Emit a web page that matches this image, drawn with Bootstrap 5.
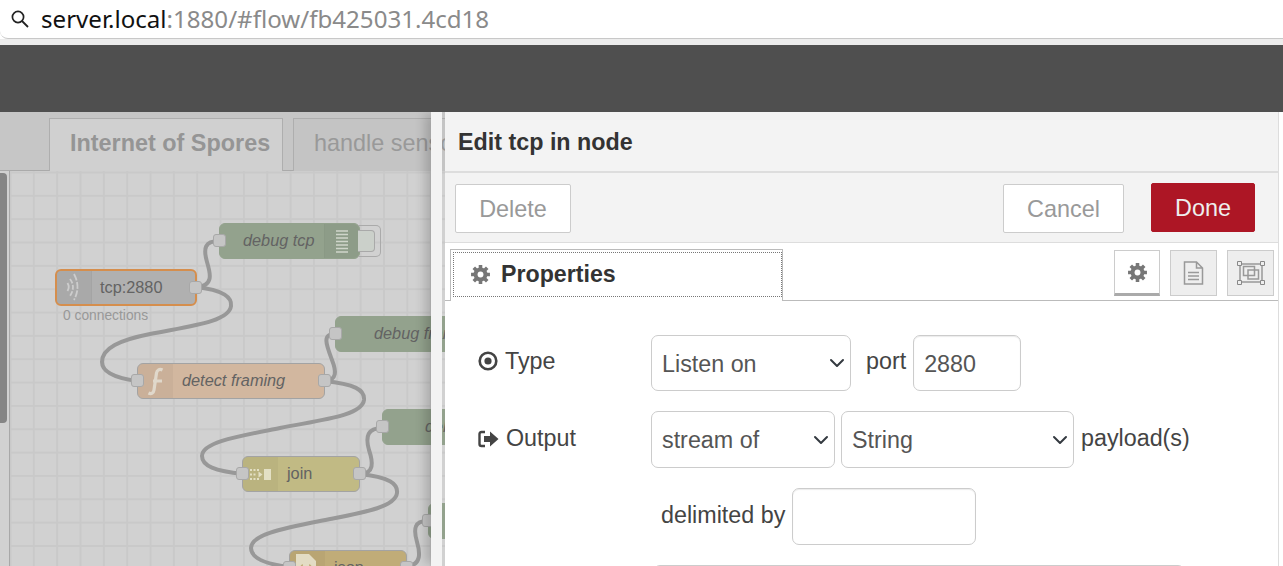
<!DOCTYPE html>
<html lang="en">
<head>
    <meta charset="UTF-8">
    <meta name="viewport" content="width=device-width, initial-scale=1.0">
    <title>Node-RED</title>
    <link rel="stylesheet" href="https://cdn.jsdelivr.net/npm/bootstrap@5.3.0/dist/css/bootstrap.min.css">
    <style>
        html, body { height: 566px; overflow: hidden; background: #fff; }
        body { font-family: "Liberation Sans", Arial, sans-serif; color: #444; }

        /* browser address bar */
        .addr-bar { height: 39px; border-bottom: 1px solid #c8c8c8; border-bottom-left-radius: 8px; padding-left: 10px; font-family: "Noto Sans", sans-serif; font-size: 24.1px; color: #8a8a8a; white-space: nowrap; }
        .addr-bar b { font-weight: 400; color: #111; }
        .addr-bar svg { margin-right: 11px; }
        .addr-gap { height: 6px; background: #ececec; }
        .top-header { height: 67px; background: #4f4f4f; }

        /* workspace */
        .workspace { height: 454px; background: #c6c6c6; overflow: hidden; }
        .flow-tabs { height: 59px; padding: 6px 0 0 49px; border-bottom: 1px solid #aaa; flex-wrap: nowrap; gap: 10px; }
        .flow-tabs .nav-link { height: 53px; border: 1px solid #aeaeae; border-bottom: 0; border-radius: 0; background: #c4c4c4; color: #999; font-size: 23.4px; padding: 7px 20px; white-space: nowrap; }
        .flow-tabs .nav-link.active { background: #d0d0d0; color: #959595; font-weight: 700; width: 234px; margin-bottom: 0; }
        .flow-grid { position: absolute; left: 0; right: 0; top: 59px; bottom: 0; background-color: #d1d1d1; background-image: linear-gradient(#c9c9c9 2px, transparent 2px), linear-gradient(90deg, #c9c9c9 2px, transparent 2px); background-size: 23.35px 23.35px; background-position: 9.5px 0.5px; }
        .grid-edge { position: absolute; left: 0; top: 0; bottom: 0; width: 10px; background: #d1d1d1; border-right: 1px solid #a8a8a8; }
        .grid-thumb { position: absolute; left: 0; top: 2px; width: 7px; height: 250px; background: #858585; border-radius: 0 4px 4px 0; }
        .wires { position: absolute; left: 0; top: 0; }
        .wires path { fill: none; stroke: #989898; stroke-width: 4; }

        .flow-node { position: absolute; height: 36px; border: 1px solid #a3a3a3; border-radius: 6px; font-size: 16.3px; line-height: 33px; color: #636363; white-space: nowrap; }
        .flow-node .node-ico { position: absolute; top: 0; bottom: 0; width: 35px; background: rgba(0,0,0,.035); }
        .flow-node em { position: absolute; }
        .flow-node .node-txt { position: absolute; }
        .port { position: absolute; top: 10px; width: 13px; height: 13px; background: #c5c5c5; border: 1px solid #a8a8a8; border-radius: 3px; }
        .port-in { left: -7px; }
        .port-out { right: -7px; }

        .n-tcp { left: 55px; top: 98px; width: 142px; height: 37px; background: #b0b0b0; border: 2px solid #d58e4d; }
        .n-tcp .node-ico { left: 0; border-radius: 4px 0 0 4px; border-right: 1px solid #a4a4a4; }
        .n-tcp .node-txt { left: 43px; line-height: 33px; }
        .n-debug-tcp { left: 219px; top: 52px; width: 141px; background: #93a28d; border-color: #93a28d; }
        .n-debug-tcp em { left: 23px; }
        .n-debug-tcp .node-ico { right: 0; border-radius: 0 6px 6px 0; border-left: 1px solid #8a9985; }
        .debug-btn { position: absolute; left: 358px; top: 54px; width: 23px; height: 32px; border: 1px solid #aaa; border-left: 0; border-radius: 0 5px 5px 0; padding: 4px 5px 4px 0; }
        .debug-btn span { display: block; height: 100%; background: #cbd0ca; border: 1px solid #a9a9a9; border-left: 0; border-radius: 0 4px 4px 0; }
        .n-debug-frame { left: 335px; top: 145px; width: 160px; background: #93a28d; border-color: #93a28d; }
        .n-debug-frame em { left: 38px; }
        .n-debug-three { left: 382px; top: 238px; width: 160px; background: #93a28d; border-color: #93a28d; }
        .n-debug-three em { left: 42px; }
        .n-debug-four { left: 428px; top: 332px; width: 160px; background: #93a28d; border-color: #93a28d; }
        .n-detect { left: 137px; top: 192px; width: 188px; background: #d2b79f; }
        .n-detect em { left: 44px; }
        .n-detect .node-ico { left: 0; border-radius: 5px 0 0 5px; }
        .n-join { left: 242px; top: 285px; width: 118px; background: #c1ba84; }
        .n-join .node-ico { left: 0; border-radius: 5px 0 0 5px; }
        .n-join .node-txt { left: 44px; }
        .n-json { left: 289px; top: 379px; width: 118px; background: #c0ac78; }
        .n-json .node-ico { left: 0; border-radius: 5px 0 0 5px; }
        .n-json .node-txt { left: 44px; }
        .node-status { position: absolute; left: 63px; top: 135px; font-size: 13.8px; color: #989898; white-space: nowrap; }
        .node-ico svg { position: absolute; left: 0; top: 0; }

        /* edit tray */
        .edit-tray { position: absolute; left: 431px; top: 0; right: 0; bottom: 0; box-shadow: -8px 0 10px -2px rgba(0,0,0,.18); }
        .tray-handle { width: 11px; background: #f3f3f3; }
        .tray-panel { position: absolute; left: 14px; top: 0; right: 4px; bottom: 0; background: #fff; border-right: 1px solid #ddd; }
        .edit-tray-back { position: absolute; right: 0; top: 0; bottom: 0; width: 4px; background: #fff; }
        .tray-head { height: 61px; background: #f3f3f3; border-bottom: 2px solid #ddd; padding: 15px 0 0 13px; font-size: 23.3px; font-weight: 700; color: #333; line-height: 30px; }
        .tray-tools { height: 70px; background: #f3f3f3; border-bottom: 1px solid #ddd; padding: 11px 23px 0 10px; }
        .tray-btn { height: 49px; border-radius: 2px; font-size: 23.4px; line-height: 1; padding: 2px 0 0; background: #fff; border: 1px solid #ccc; color: #999; }
        .tray-btn:hover { background: #fff; color: #999; border-color: #ccc; }
        .btn-delete { width: 116px; }
        .btn-cancel { width: 121px; margin-right: 27px; }
        .btn-done { width: 104px; margin-top: -1px; background: #ad1625; border-color: #ad1625; color: #eee; }
        .btn-done:hover { background: #ad1625; border-color: #ad1625; color: #eee; }

        .edit-tabs { height: 58px; border-bottom: 1px solid #bbb; padding: 6px 4px 0 5px; flex-wrap: nowrap; }
        .edit-tabs .nav-link.active { width: 333px; height: 52px; border: 1px solid #bbb; border-bottom: 0; border-radius: 0; margin: 0; padding: 2px 0 0 2px; background: #fff; color: #333; font-size: 23.2px; font-weight: 700; }
        .tab-focus { height: 45px; margin-right: 0; border: 1px dotted #777; display: flex; align-items: center; padding: 1px 0 1px 16px; gap: 10px; }
        .side-btns { gap: 10px; margin-left: auto; padding-top: 1px; }
        .side-btn { width: 47px; height: 46px; border: 1px solid #ccc; background: #eee; padding: 0; border-radius: 0; }
        .side-btn.selected { width: 46px; background: #fff; border-bottom: 3px solid #aaa; }

        .edit-form { padding: 34px 0 0 33px; font-size: 23.3px; color: #444; }
        .edit-row { margin-bottom: 20px; }
        .edit-row label { width: 173px; display: flex; align-items: center; gap: 7px; margin: 0; padding-bottom: 4px; }
        .edit-form .form-select, .edit-form .form-control { height: 56px; font-size: 23.3px; color: #555; border: 1px solid #ccc; border-radius: 7px; padding: 2px 10px 0; box-shadow: none; }
        .edit-form .form-select { background-size: 22px 16px; background-position: right 2px center; }
        .edit-form .form-control { box-shadow: inset 0 1px 1px rgba(0,0,0,.08); }
        .sel-mode { width: 200px; }
        .port-word { margin: 0 7px 0 15px; }
        .txt-port { width: 108px; }
        .sel-stream { width: 184px; }
        .sel-type { width: 233px; margin: 0 7px 0 6px; }
        .txt-delim { width: 184px; }
        .edit-form .row-tall { height: 57px; }
        .edit-form .row-tall label { padding-bottom: 2px; }
        .edit-form .row-tall .form-select, .edit-form .row-tall .form-control { height: 57px; }
        .row-text { padding-bottom: 4px; white-space: nowrap; }
        .edit-form .row-tall .row-text { padding-bottom: 2px; }
        .delim-word { margin: 0 7px 0 183px; }
        .next-box { width: 532px; height: 40px; margin-left: 175px; border: 1px solid #ccc; border-radius: 7px 7px 0 0; }
    </style>
</head>
<body>
    <div class="addr-bar d-flex align-items-center">
        <svg width="20" height="20" viewBox="0 0 20 20" class="flex-shrink-0"><circle cx="8" cy="8" r="5.6" fill="none" stroke="#222" stroke-width="1.7"/><path d="M12 12l6 6" stroke="#222" stroke-width="1.8"/></svg>
        <span class="addr-url"><b>server.local</b>:1880/#flow/fb425031.4cd18</span>
    </div>
    <div class="addr-gap"></div>
    <div class="top-header"></div>

    <div class="workspace position-relative">
        <ul class="nav flow-tabs">
            <li class="nav-item"><a class="nav-link active" href="#">Internet of Spores</a></li>
            <li class="nav-item"><a class="nav-link" href="#">handle sensor data</a></li>
        </ul>
        <div class="flow-grid">
            <div class="grid-edge"><div class="grid-thumb"></div></div>
            <svg class="wires" width="520" height="400">
                <g transform="translate(0,-171)">
                    <path d="M195 287C215 287 210 272 207 262C203 248 205 241 219 241"/>
                    <path d="M195 287C225 290 232 298 231 306C229 322 190 326 150 334C120 340 102 348 102 362C102 372 115 378 137 381"/>
                    <path d="M324 381C338 381 336 370 332 360C326 344 322 334 335 334"/>
                    <path d="M324 381C355 384 365 390 364 400C362 416 320 420 280 428C240 436 202 442 202 456C202 466 215 471 243 474"/>
                    <path d="M359 474C375 474 373 462 369 450C365 436 368 428 382 428"/>
                    <path d="M359 474C390 477 398 484 397 493C395 508 360 513 320 521C280 529 251 535 251 548C251 558 265 564 289 567"/>
                    <path d="M406 566C422 566 420 552 417 542C413 528 415 521 427 521"/>
                </g>
            </svg>

            <div class="flow-node n-debug-tcp">
                <span class="port port-in"></span><em>debug tcp</em>
                <div class="node-ico"><svg width="35" height="34" viewBox="0 0 35 34"><path d="M11 7h12M11 10.500h12M11 14h12M11 17.500h12M11 21h12M11 24.500h12M11 28h12" stroke="#cfd5ca" stroke-width="1.400"/></svg></div>
            </div>
            <div class="debug-btn"><span></span></div>

            <div class="flow-node n-tcp">
                <div class="node-ico"><svg width="35" height="33" viewBox="0 0 35 33"><g fill="none" stroke="#cdcdcd" stroke-width="1.800"><path d="M17 3Q24 16 17 29" stroke-dasharray="7 1.500"/><path d="M13 8Q19 16 13 25" stroke-dasharray="5 1.500"/><path d="M10.500 12Q13 16 10.500 20"/></g></svg></div>
                <span class="node-txt">tcp:2880</span><span class="port port-out"></span>
            </div>
            <div class="node-status">0 connections</div>

            <div class="flow-node n-debug-frame"><span class="port port-in"></span><em>debug frame</em></div>
            <div class="flow-node n-debug-three"><span class="port port-in"></span><em>debug</em></div>
            <div class="flow-node n-debug-four"><span class="port port-in"></span></div>

            <div class="flow-node n-detect">
                <div class="node-ico"><svg width="35" height="34" viewBox="0 0 35 34"><path d="M24.500 6c-3-1.500-5.500 0-6 3L16 26c-.5 3-2.500 4.500-5.500 3M15 17h9" fill="none" stroke="#e0d8cb" stroke-width="3.200"/></svg></div>
                <span class="port port-in"></span><em>detect framing</em><span class="port port-out"></span>
            </div>

            <div class="flow-node n-join">
                <div class="node-ico"><svg width="35" height="34" viewBox="0 0 35 34"><path d="M7 12h2v2H7zM10.500 12h2v2h-2zM14 12h2v2h-2zM7 16.500h2v2H7zM10.500 16.500h2v2h-2zM7 21h2v2H7zM10.500 21h2v2h-2zM14 21h2v2h-2zM15.500 14.500l4 3-4 3zM21 12h7v11h-7z" fill="#e3e0c4"/></svg></div>
                <span class="port port-in"></span><span class="node-txt">join</span><span class="port port-out"></span>
            </div>

            <div class="flow-node n-json">
                <div class="node-ico"><svg width="35" height="34" viewBox="0 0 35 34"><path d="M6 3h13l7 7v24H6z" fill="#e3dcc4"/><path d="M13 14q-2 0-2 3v3q0 2-1.500 2 1.500 0 1.500 2v3q0 3 2 3M19 14q2 0 2 3v3q0 2 1.500 2-1.500 0-1.500 2v3q0 3-2 3" fill="none" stroke="#c0ac78" stroke-width="1.500"/></svg></div>
                <span class="port port-in"></span><span class="node-txt">json</span><span class="port port-out"></span>
            </div>
        </div>

        <div class="edit-tray">
            <div class="tray-handle h-100"></div>
            <div class="edit-tray-back"></div>
            <div class="tray-panel">
                <div class="tray-head">Edit tcp in node</div>
                <div class="tray-tools d-flex">
                    <button class="btn tray-btn btn-delete me-auto">Delete</button>
                    <button class="btn tray-btn btn-cancel">Cancel</button>
                    <button class="btn tray-btn btn-done">Done</button>
                </div>
                <ul class="nav edit-tabs">
                    <li class="nav-item">
                        <a class="nav-link active" href="#"><span class="tab-focus">
                            <svg width="21" height="21" viewBox="0 0 20 20"><path d="M10 1V19M1 10H19M3.600 3.600L16.400 16.400M16.400 3.600L3.600 16.400" stroke="#777" stroke-width="3.400"/><circle cx="10" cy="10" r="6.600" fill="#777"/><circle cx="10" cy="10" r="2.800" fill="#fff"/></svg>
                            Properties</span></a>
                    </li>
                    <li class="d-flex side-btns">
                        <button class="side-btn selected"><svg width="21" height="21" viewBox="0 0 20 20"><path d="M10 1V19M1 10H19M3.600 3.600L16.400 16.400M16.400 3.600L3.600 16.400" stroke="#777" stroke-width="3.400"/><circle cx="10" cy="10" r="6.600" fill="#777"/><circle cx="10" cy="10" r="2.800" fill="#fff"/></svg></button>
                        <button class="side-btn"><svg width="21" height="24" viewBox="0 0 21 24"><path d="M1.500 1h12l6 6v16h-18zM13.500 1v6h6M5 11.500h11M5 15h11M5 18.500h11" fill="none" stroke="#999" stroke-width="1.500"/></svg></button>
                        <button class="side-btn"><svg width="28" height="24" viewBox="0 0 28 24"><g fill="none" stroke="#999" stroke-width="1.500"><path d="M3 3h22v18H3z"/><path d="M6.500 5.500h11v9h-11zM11 9h10.500v9H11z"/></g><path d="M0.500 0.500h4v4h-4zM23.500 0.500h4v4h-4zM0.500 19.500h4v4h-4zM23.500 19.500h4v4h-4z" fill="#eee" stroke="#888"/></svg></button>
                    </li>
                </ul>
                <form class="edit-form">
                    <div class="edit-row d-flex align-items-center">
                        <label><svg width="20" height="20" viewBox="0 0 20 20"><circle cx="10" cy="10" r="8.300" fill="none" stroke="#444" stroke-width="2.600"/><circle cx="10" cy="10" r="3.600" fill="#444"/></svg>Type</label>
                        <select class="form-select sel-mode"><option>Listen on</option></select>
                        <span class="row-text port-word">port</span>
                        <input class="form-control txt-port" type="text" value="2880">
                    </div>
                    <div class="edit-row row-tall d-flex align-items-center">
                        <label><svg width="21" height="18" viewBox="0 0 21 18"><path d="M7 2H3.500Q1.500 2 1.500 4V14Q1.500 16 3.500 16H7" fill="none" stroke="#444" stroke-width="2.400"/><path d="M6 6h6V1.500L20.500 9 12 16.500V12H6z" fill="#444"/></svg>Output</label>
                        <select class="form-select sel-stream"><option>stream of</option></select>
                        <select class="form-select sel-type"><option>String</option></select>
                        <span class="row-text">payload(s)</span>
                    </div>
                    <div class="edit-row row-tall d-flex align-items-center">
                        <span class="row-text delim-word">delimited by</span>
                        <input class="form-control txt-delim" type="text">
                    </div>
                    <div class="next-box"></div>
                </form>
            </div>
        </div>
    </div>

    <script src="https://cdn.jsdelivr.net/npm/bootstrap@5.3.0/dist/js/bootstrap.bundle.min.js"></script>
</body>
</html>
